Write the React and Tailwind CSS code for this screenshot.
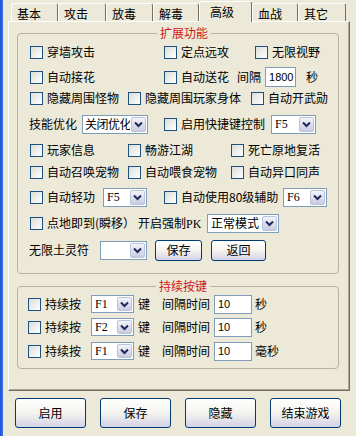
import React from 'react';

const tabs = [
  { t: '基本', w: 'w-[47px]' },
  { t: '攻击', w: 'w-[48px]' },
  { t: '放毒', w: 'w-[47px]' },
  { t: '解毒', w: 'w-[46px]' },
  { t: '高级', w: 'w-[53px]', on: true },
  { t: '血战', w: 'w-[46px]' },
  { t: '其它', w: 'w-[48px]' },
];

const Box = () => (
  <span className="block w-[13px] h-[13px] shrink-0 border border-[#1c5180] bg-linear-to-br from-[#dcdcd7] to-white" />
);

const Check = ({ label, className = '' }) => (
  <div className={`flex items-center gap-[4px] shrink-0 whitespace-nowrap ${className}`}>
    <Box />
    <span>{label}</span>
  </div>
);

const Arrow = () => (
  <svg width="9" height="7" viewBox="0 0 9 7">
    <path d="M1 1.5 L4.5 5 L8 1.5" fill="none" stroke="#1e2b5a" strokeWidth="2" />
  </svg>
);

const Combo = ({ value, className = '', mono, tight }) => (
  <div className={`flex items-center shrink-0 bg-white border border-[#7f9db9] ${className}`}>
    <span
      className={`flex-1 whitespace-nowrap overflow-hidden ${tight ? 'pl-[2px] tracking-[-0.5px]' : 'pl-[3px]'} ${
        mono ? "font-['Liberation_Serif',serif] text-[12px]" : ''
      }`}
    >
      {value}
    </span>
    <span className="self-stretch m-px w-[15px] rounded-[2px] border border-[#b9c3dc] bg-linear-to-b from-[#f4f4fa] to-[#c9cce2] flex items-center justify-center">
      <Arrow />
    </span>
  </div>
);

const Input = ({ value, className = '' }) => (
  <div
    className={`shrink-0 bg-white border border-[#7f9db9] pl-[3px] flex items-center font-['Liberation_Sans',sans-serif] text-[11px] ${className}`}
  >
    {value}
  </div>
);

const Btn = ({ label, className = '' }) => (
  <button
    className={`shrink-0 flex items-center justify-center rounded-[3px] border border-[#003c74] bg-linear-to-b from-white via-[#f4f3ee] to-[#d4d2e6] text-black ${className}`}
  >
    {label}
  </button>
);

const Row = ({ className = '', children }) => (
  <div className={`flex items-center h-[20px] ${className}`}>{children}</div>
);

const Group = ({ title, className = '', children }) => (
  <fieldset className={`border border-[#b5b2a3] rounded-[4px] ${className}`}>
    <legend align="center" className="mx-auto px-[3px] leading-[16px] text-[#d01818]">
      {title}
    </legend>
    {children}
  </fieldset>
);

export default function App() {
  return (
    <div className="w-[356px] h-[436px] flex bg-[#ece9d8] text-[12px] text-black font-['Noto_Sans_CJK_SC','Noto_Sans',sans-serif] overflow-hidden">
      <div className="w-[3px] h-full bg-linear-to-r from-[#1d4fd2] to-[#3d74e4]" />
      <div className="flex-1 flex flex-col">
        {/* tab strip */}
        <div className="relative z-10 flex items-end h-[21px] pl-[8px]">
          {tabs.map((tb) => (
            <div
              key={tb.t}
              className={`${tb.w} flex items-center rounded-t-[3px] border-t border-l border-r border-t-white border-l-white border-r-[#716f64] ${
                tb.on
                  ? 'h-[21px] -mb-px pl-[10px] pb-[1px] bg-[#ece9d8]'
                  : 'h-[18px] pl-[5px] pt-[2px]'
              }`}
            >
              {tb.t}
            </div>
          ))}
        </div>

        {/* tab panel */}
        <div className="ml-[5px] w-[342px] h-[370px] border border-l-white border-t-white border-r-[#716f64] border-b-[#716f64] shadow-[inset_-1px_-1px_0_#aca899] flex flex-col">
          <Group title="扩展功能" className="mt-[3px] ml-[8px] w-[322px] pl-[12px] pb-[13px]">
            <Row className="mt-[1px]">
              <Check label="穿墙攻击" className="w-[134px]" />
              <Check label="定点远攻" className="w-[91px]" />
              <Check label="无限视野" />
            </Row>
            <Row className="mt-[5px]">
              <Check label="自动接花" className="w-[134px]" />
              <Check label="自动送花" className="w-[73px]" />
              <span>间隔</span>
              <Input value="1800" className="ml-[4px] w-[31px] h-[20px]" />
              <span className="ml-[10px]">秒</span>
            </Row>
            <Row className="mt-[1px]">
              <Check label="隐藏周围怪物" className="w-[98px]" />
              <Check label="隐藏周围玩家身体" className="w-[123px]" />
              <Check label="自动开武勋" />
            </Row>
            <Row className="mt-[6px]">
              <span className="w-[52px] -ml-px">技能优化</span>
              <Combo value="关闭优化" tight className="w-[66px] h-[19px] ml-px" />
              <Check label="启用快捷键控制" className="ml-[16px]" />
              <Combo value="F5" mono className="ml-[6px] w-[45px] h-[19px]" />
            </Row>
            <Row className="mt-[6px]">
              <Check label="玩家信息" className="w-[98px]" />
              <Check label="畅游江湖" className="w-[103px]" />
              <Check label="死亡原地复活" />
            </Row>
            <Row className="mt-[2px]">
              <Check label="自动召唤宠物" className="w-[98px]" />
              <Check label="自动喂食宠物" className="w-[103px]" />
              <Check label="自动异口同声" />
            </Row>
            <Row className="mt-[5px]">
              <Check label="自动轻功" className="w-[73px]" />
              <Combo value="F5" mono className="w-[44px] h-[19px]" />
              <Check label="自动使用80级辅助" className="ml-[17px] w-[119px]" />
              <Combo value="F6" mono className="w-[44px] h-[19px]" />
            </Row>
            <Row className="mt-[6px]">
              <Check label="点地即到(瞬移）" className="w-[108px]" />
              <span className="w-[69px] whitespace-nowrap">
                开启强制<span className="font-['Liberation_Serif',serif]">PK</span>
              </span>
              <Combo value="正常模式" className="w-[72px] h-[19px]" />
            </Row>
            <Row className="mt-[7px]">
              <span className="w-[70px] -ml-px">无限土灵符</span>
              <Combo value="" className="w-[47px] h-[19px] ml-px" />
              <Btn label="保存" className="ml-[8px] w-[47px] h-[21px]" />
              <Btn label="返回" className="ml-[9px] w-[55px] h-[21px]" />
            </Row>
          </Group>

          <Group title="持续按键" className="mt-[4px] ml-[8px] w-[322px] pl-[10px] pb-[7px]">
            {[
              { k: 'F1', u: '秒', m: '' },
              { k: 'F2', u: '秒', m: 'mt-[3px]' },
              { k: 'F1', u: '毫秒', m: 'mt-[4px]' },
            ].map((r, i) => (
              <Row key={i} className={r.m}>
                <Check label="持续按" className="w-[63px]" />
                <Combo value={r.k} mono className="w-[43px] h-[18px]" />
                <span className="ml-[4px] w-[24px]">键</span>
                <span className="w-[52px]">间隔时间</span>
                <Input value="10" className="w-[38px] h-[19px]" />
                <span className="ml-[3px]">{r.u}</span>
              </Row>
            ))}
          </Group>
        </div>

        {/* bottom buttons */}
        <div className="flex mt-[7px] pl-[12px] gap-[14px]">
          <Btn label="启用" className="w-[71px] h-[30px]" />
          <Btn label="保存" className="w-[71px] h-[30px]" />
          <Btn label="隐藏" className="w-[71px] h-[30px]" />
          <Btn label="结束游戏" className="w-[71px] h-[30px]" />
        </div>
      </div>
    </div>
  );
}
